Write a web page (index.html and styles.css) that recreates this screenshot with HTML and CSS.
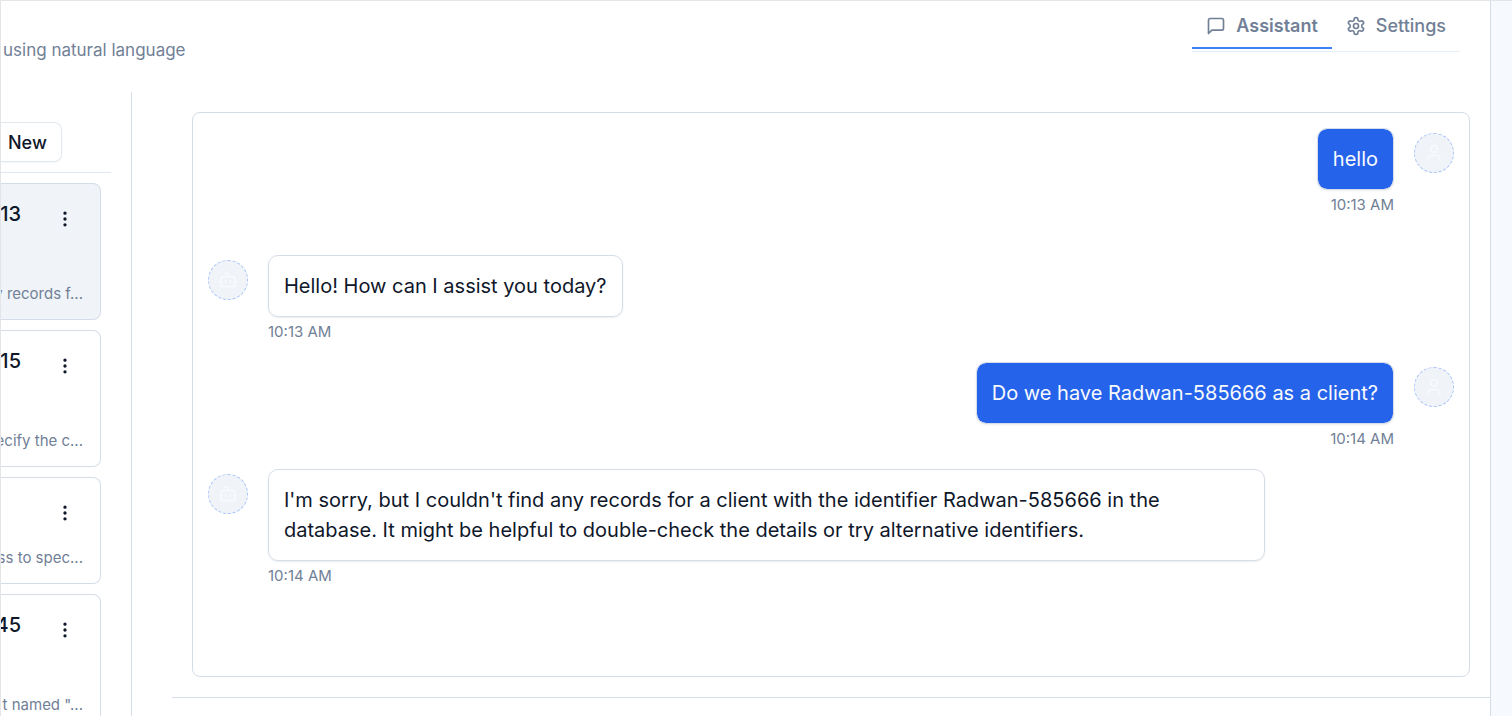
FILE: index.html
```
<!DOCTYPE html>
<html lang="en">
<head>
<meta charset="utf-8">
<title>Assistant</title>
<link rel="stylesheet" href="styles.css">
</head>
<body>
<svg class="sprite" aria-hidden="true">
  <symbol id="dots" viewBox="0 0 24 24"><circle cx="12" cy="12" r="1"/><circle cx="12" cy="5" r="1"/><circle cx="12" cy="19" r="1"/></symbol>
  <symbol id="user" viewBox="0 0 24 24"><path d="M19 21v-2a4 4 0 0 0-4-4H9a4 4 0 0 0-4 4v2"/><circle cx="12" cy="7" r="4"/></symbol>
  <symbol id="bot" viewBox="0 0 24 24"><path d="M12 8V4H8"/><rect width="16" height="12" x="4" y="8" rx="2"/><path d="M2 14h2M20 14h2M15 13v2M9 13v2"/></symbol>
</svg>
<div class="page">
  <header class="header">
    <p class="subtitle">using natural language</p>
    <nav class="tabs" aria-label="Views">
      <button class="tab tab-active" type="button">
        <svg class="icon" viewBox="0 0 24 24"><path d="M21 15a2 2 0 0 1-2 2H7l-4 4V5a2 2 0 0 1 2-2h14a2 2 0 0 1 2 2z"/></svg>
        Assistant
      </button>
      <button class="tab" type="button">
        <svg class="icon" viewBox="0 0 24 24"><path d="M12.22 2h-.44a2 2 0 0 0-2 2v.18a2 2 0 0 1-1 1.73l-.43.25a2 2 0 0 1-2 0l-.15-.08a2 2 0 0 0-2.73.73l-.22.38a2 2 0 0 0 .73 2.73l.15.1a2 2 0 0 1 1 1.72v.51a2 2 0 0 1-1 1.74l-.15.09a2 2 0 0 0-.73 2.73l.22.38a2 2 0 0 0 2.73.73l.15-.08a2 2 0 0 1 2 0l.43.25a2 2 0 0 1 1 1.73V20a2 2 0 0 0 2 2h.44a2 2 0 0 0 2-2v-.18a2 2 0 0 1 1-1.73l.43-.25a2 2 0 0 1 2 0l.15.08a2 2 0 0 0 2.73-.73l.22-.39a2 2 0 0 0-.73-2.73l-.15-.08a2 2 0 0 1-1-1.74v-.5a2 2 0 0 1 1-1.74l.15-.09a2 2 0 0 0 .73-2.73l-.22-.38a2 2 0 0 0-2.73-.73l-.15.08a2 2 0 0 1-2 0l-.43-.25a2 2 0 0 1-1-1.73V4a2 2 0 0 0-2-2z"/><circle cx="12" cy="12" r="3"/></svg>
        Settings
      </button>
    </nav>
  </header>
  <div class="body">
    <aside class="sidebar">
      <div class="sidebar-top"><button class="new" type="button">New</button></div>
      <div class="list">
        <article class="card card-selected">
          <div class="card-head card-tall"><h2 class="card-title">13</h2><button class="more" type="button" aria-label="More options"><svg class="icon"><use href="#dots"/></svg></button></div>
          <p class="snippet">y records f...</p>
        </article>
        <article class="card">
          <div class="card-head card-tall"><h2 class="card-title">15</h2><button class="more" type="button" aria-label="More options"><svg class="icon"><use href="#dots"/></svg></button></div>
          <p class="snippet">ecify the c...</p>
        </article>
        <article class="card">
          <div class="card-head"><button class="more" type="button" aria-label="More options"><svg class="icon"><use href="#dots"/></svg></button></div>
          <p class="snippet">ss to spec...</p>
        </article>
        <article class="card">
          <div class="card-head card-tall"><h2 class="card-title">45</h2><button class="more" type="button" aria-label="More options"><svg class="icon"><use href="#dots"/></svg></button></div>
          <p class="snippet">t named "...</p>
        </article>
      </div>
    </aside>
    <main class="main">
      <section class="chat" aria-label="Conversation">
        <div class="message message-user message-first">
          <div class="content"><p class="bubble">hello</p><time class="time">10:13 AM</time></div>
          <span class="avatar"><svg class="icon"><use href="#user"/></svg></span>
        </div>
        <div class="message">
          <span class="avatar"><svg class="icon"><use href="#bot"/></svg></span>
          <div class="content"><p class="bubble">Hello! How can I assist you today?</p><time class="time">10:13 AM</time></div>
        </div>
        <div class="message message-user">
          <div class="content"><p class="bubble">Do we have Radwan-585666 as a client?</p><time class="time">10:14 AM</time></div>
          <span class="avatar"><svg class="icon"><use href="#user"/></svg></span>
        </div>
        <div class="message">
          <span class="avatar"><svg class="icon"><use href="#bot"/></svg></span>
          <div class="content"><p class="bubble">I'm sorry, but I couldn't find any records for a client with the identifier Radwan-585666 in the database. It might be helpful to double-check the details or try alternative identifiers.</p><time class="time">10:14 AM</time></div>
        </div>
      </section>
      <div class="composer"></div>
    </main>
  </div>
</div>
</body>
</html>
```
FILE: styles.css
```
* { box-sizing: border-box; }

body {
  margin: 0;
  height: 100vh;
  overflow: hidden;
  padding-right: 22px;
  background: #f6fafe;
  color: #0f172a;
  font-family: Inter, "Liberation Sans", sans-serif;
  border-top: 1px solid #e5e5e7;
}

h2, p { margin: 0; }

button {
  border: 0;
  background: none;
  color: inherit;
  font: inherit;
}

.sprite { position: absolute; width: 0; height: 0; }

.icon {
  width: 20px;
  height: 20px;
  flex: none;
  fill: none;
  stroke: currentColor;
  stroke-width: 2;
  stroke-linecap: round;
  stroke-linejoin: round;
}

.page {
  display: flex;
  flex-direction: column;
  height: 100%;
  background: #fff;
  border-left: 1px solid #e5e5e7;
  box-shadow: 1px 0 0 #d5dde9;
}

.header {
  flex: none;
  display: flex;
  justify-content: space-between;
  align-items: flex-start;
  padding: 0 30px 40px 2px;
  color: #718096;
  font-size: 18px;
  line-height: 28px;
}

.subtitle { padding-top: 35px; margin-bottom: -12px; font-size: 17px; }

.tabs {
  display: flex;
  padding-bottom: 2px;
  border-bottom: 1px solid #e7edf4;
}

.tab {
  display: flex;
  align-items: center;
  gap: 10px;
  padding: 11px 14px 7px;
  border-bottom: 2px solid transparent;
  font-weight: 500;
}

.tab-active { border-color: #3b82f6; font-weight: 600; }

.body { flex: 1; min-height: 0; display: flex; }

.sidebar {
  flex: none;
  width: 131px;
  padding: 30px 20px 0 0;
  border-right: 1px solid #d5dde9;
  overflow: hidden;
}

.sidebar-top {
  padding-bottom: 10px;
  border-bottom: 1px solid #e2e8f0;
}

.new {
  height: 40px;
  padding: 0 14px 0 7px;
  border: 1px solid #e2e8f0;
  border-left: 0;
  border-radius: 0 8px 8px 0;
  box-shadow: 0 1px 2px #0f172a0a;
  font-size: 18px;
  font-weight: 500;
}

.list {
  display: flex;
  flex-direction: column;
  gap: 10px;
  padding: 10px 10px 0 0;
}

.card {
  padding: 15px;
  padding-left: 0;
  border: 1px solid #d5dde9;
  border-left: 0;
  border-radius: 0 8px 8px 0;
}

.card-selected { background: #f0f4f9; }

.card-head {
  display: flex;
  justify-content: flex-end;
  align-items: flex-start;
  gap: 24px;
  min-height: 55px;
}

.card-tall { min-height: 85px; }

.card-title {
  display: flex;
  justify-content: flex-end;
  width: 20px;
  font-size: 20px;
  font-weight: 500;
  line-height: 30px;
}

.more {
  display: grid;
  place-items: center;
  width: 40px;
  height: 40px;
  padding: 0;
}

.snippet {
  display: flex;
  justify-content: flex-end;
  padding-right: 2px;
  color: #718096;
  font-size: 15px;
  line-height: 20px;
  white-space: nowrap;
}

.main {
  flex: 1;
  min-width: 0;
  display: flex;
  flex-direction: column;
  padding: 20px 0 0 40px;
}

.chat {
  flex: 1;
  margin: 0 20px 20px;
  padding: 15px;
  border: 1px solid #d5dde9;
  border-radius: 8px;
}

.message {
  display: flex;
  align-items: flex-start;
  gap: 20px;
  margin-bottom: 20px;
}

.message-first { margin-bottom: 40px; }

.message-user { justify-content: flex-end; }

.content {
  display: flex;
  flex-direction: column;
  align-items: flex-start;
  gap: 5px;
  max-width: 80%;
}

.message-user .content { align-items: flex-end; }

.bubble {
  padding: 15px;
  border: 1px solid #d5dde9;
  border-radius: 10px;
  box-shadow: 0 1px 2px #0f172a14;
  font-size: 20px;
  line-height: 30px;
}

.message-user .bubble {
  background: #2563eb;
  background-clip: padding-box;
  color: #f8fafc;
}

.time { color: #718096; font-size: 15px; line-height: 20px; }

.avatar {
  flex: none;
  display: grid;
  place-items: center;
  width: 40px;
  height: 40px;
  margin-top: 5px;
  border: 1px dashed #a9c4fa;
  border-radius: 50%;
  background: #f0f4f9;
  color: #f8fafc;
}

.composer {
  flex: none;
  height: 19px;
  border-top: 1px solid #d5dde9;
}
```
